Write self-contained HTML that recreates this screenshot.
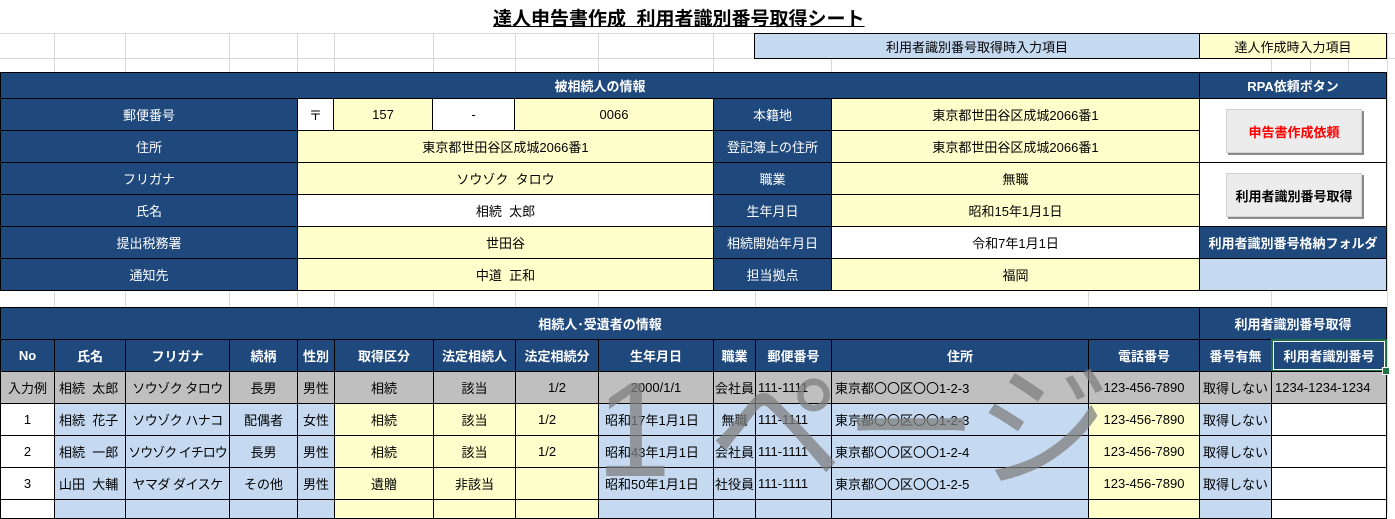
<!DOCTYPE html>
<html><head><meta charset="utf-8"><style>
body{margin:0;width:1395px;height:509px;overflow:hidden;background:#fff;font-family:"Liberation Sans","Noto Sans CJK JP",sans-serif;position:relative}
.c{position:absolute;box-sizing:border-box;border:1px solid #000;display:flex;align-items:center;justify-content:center;font-size:13px;white-space:nowrap;overflow:hidden;color:#000}
.d{background:#1f497d;color:#fff}
.h{font-weight:bold}
.y{background:#ffffcc}.b{background:#c5d9f1}.g{background:#bfbfbf}.w{background:#fff}
.l{justify-content:flex-start;padding-left:4px}
.k{letter-spacing:-0.5px}
.vl{position:absolute;width:1px;background:#d9d9d9}
.hl{position:absolute;height:1px;background:#d9d9d9}
.btn{position:absolute;background:#ececec;border:1px solid #d0d0d0;box-shadow:2px 2px 0 #8a8a8a;display:flex;align-items:center;justify-content:center;font-size:13px;font-weight:bold}
</style></head><body>
<div class="hl" style="left:0;top:33px;width:1395px"></div>
<div class="hl" style="left:0;top:58px;width:1395px"></div>
<div class="vl" style="left:54px;top:33px;height:39px"></div>
<div class="vl" style="left:125px;top:33px;height:39px"></div>
<div class="vl" style="left:229px;top:33px;height:39px"></div>
<div class="vl" style="left:297px;top:33px;height:39px"></div>
<div class="vl" style="left:334px;top:33px;height:39px"></div>
<div class="vl" style="left:433px;top:33px;height:39px"></div>
<div class="vl" style="left:515px;top:33px;height:39px"></div>
<div class="vl" style="left:598px;top:33px;height:39px"></div>
<div class="vl" style="left:713px;top:33px;height:39px"></div>
<div class="vl" style="left:831px;top:58px;height:14px"></div>
<div class="vl" style="left:1271px;top:58px;height:14px"></div>
<div class="vl" style="left:1310px;top:58px;height:14px"></div>
<div class="vl" style="left:1348px;top:58px;height:14px"></div>
<div class="vl" style="left:1387px;top:33px;height:480px"></div>
<div class="vl" style="left:54px;top:290px;height:17px"></div>
<div class="vl" style="left:125px;top:290px;height:17px"></div>
<div class="vl" style="left:229px;top:290px;height:17px"></div>
<div class="vl" style="left:297px;top:290px;height:17px"></div>
<div class="vl" style="left:334px;top:290px;height:17px"></div>
<div class="vl" style="left:433px;top:290px;height:17px"></div>
<div class="vl" style="left:515px;top:290px;height:17px"></div>
<div class="vl" style="left:598px;top:290px;height:17px"></div>
<div class="vl" style="left:755px;top:290px;height:17px"></div>
<div class="vl" style="left:1088px;top:290px;height:17px"></div>
<div class="vl" style="left:1271px;top:290px;height:17px"></div>

<div style="position:absolute;left:493px;top:4px;font-size:19px;font-weight:bold;text-decoration:underline;white-space:nowrap">達人申告書作成&nbsp;&nbsp;利用者識別番号取得シート</div>

<div class="c b" style="left:754px;top:33px;width:446px;height:26px">利用者識別番号取得時入力項目</div>
<div class="c y" style="left:1199px;top:33px;width:188px;height:26px">達人作成時入力項目</div>

<div class="c d h" style="left:0;top:72px;width:1200px;height:27px">被相続人の情報</div>
<div class="c d h" style="left:1199px;top:72px;width:188px;height:27px">RPA依頼ボタン</div>

<div class="c d" style="left:0;top:98px;width:298px;height:33px">郵便番号</div>
<div class="c w" style="left:297px;top:98px;width:37px;height:33px">〒</div>
<div class="c y" style="left:333px;top:98px;width:100px;height:33px">157</div>
<div class="c w" style="left:432px;top:98px;width:83px;height:33px">-</div>
<div class="c y" style="left:514px;top:98px;width:200px;height:33px">0066</div>
<div class="c d" style="left:713px;top:98px;width:119px;height:33px">本籍地</div>
<div class="c y" style="left:831px;top:98px;width:369px;height:33px">東京都世田谷区成城2066番1</div>

<div class="c d" style="left:0;top:130px;width:298px;height:33px">住所</div>
<div class="c y" style="left:297px;top:130px;width:417px;height:33px">東京都世田谷区成城2066番1</div>
<div class="c d" style="left:713px;top:130px;width:119px;height:33px">登記簿上の住所</div>
<div class="c y" style="left:831px;top:130px;width:369px;height:33px">東京都世田谷区成城2066番1</div>

<div class="c d" style="left:0;top:162px;width:298px;height:33px">フリガナ</div>
<div class="c y" style="left:297px;top:162px;width:417px;height:33px">ソウゾク&nbsp;&nbsp;タロウ</div>
<div class="c d" style="left:713px;top:162px;width:119px;height:33px">職業</div>
<div class="c y" style="left:831px;top:162px;width:369px;height:33px">無職</div>

<div class="c d" style="left:0;top:194px;width:298px;height:33px">氏名</div>
<div class="c w" style="left:297px;top:194px;width:417px;height:33px">相続&nbsp;&nbsp;太郎</div>
<div class="c d" style="left:713px;top:194px;width:119px;height:33px">生年月日</div>
<div class="c y" style="left:831px;top:194px;width:369px;height:33px">昭和15年1月1日</div>

<div class="c d" style="left:0;top:226px;width:298px;height:33px">提出税務署</div>
<div class="c y" style="left:297px;top:226px;width:417px;height:33px">世田谷</div>
<div class="c d" style="left:713px;top:226px;width:119px;height:33px">相続開始年月日</div>
<div class="c w" style="left:831px;top:226px;width:369px;height:33px">令和7年1月1日</div>

<div class="c d" style="left:0;top:258px;width:298px;height:33px">通知先</div>
<div class="c y" style="left:297px;top:258px;width:417px;height:33px">中道&nbsp;&nbsp;正和</div>
<div class="c d" style="left:713px;top:258px;width:119px;height:33px">担当拠点</div>
<div class="c y" style="left:831px;top:258px;width:369px;height:33px">福岡</div>

<div class="c w" style="left:1199px;top:98px;width:188px;height:65px"></div>
<div class="c w" style="left:1199px;top:162px;width:188px;height:65px"></div>
<div class="c d h" style="left:1199px;top:226px;width:188px;height:33px">利用者識別番号格納フォルダ</div>
<div class="c b" style="left:1199px;top:258px;width:188px;height:33px"></div>
<div class="btn" style="left:1226px;top:109px;width:134px;height:42px;color:#f00">申告書作成依頼</div>
<div class="btn" style="left:1226px;top:173px;width:134px;height:42px;color:#000">利用者識別番号取得</div>

<div class="c d h" style="left:0;top:307px;width:1200px;height:33px">相続人･受遺者の情報</div>
<div class="c d h" style="left:1199px;top:307px;width:188px;height:33px">利用者識別番号取得</div>

<div class="c d h" style="left:0;top:339px;width:55px;height:33px">No</div>
<div class="c d h" style="left:54px;top:339px;width:72px;height:33px">氏名</div>
<div class="c d h" style="left:125px;top:339px;width:105px;height:33px">フリガナ</div>
<div class="c d h" style="left:229px;top:339px;width:69px;height:33px">続柄</div>
<div class="c d h" style="left:297px;top:339px;width:38px;height:33px">性別</div>
<div class="c d h" style="left:334px;top:339px;width:100px;height:33px">取得区分</div>
<div class="c d h" style="left:433px;top:339px;width:83px;height:33px">法定相続人</div>
<div class="c d h" style="left:515px;top:339px;width:84px;height:33px">法定相続分</div>
<div class="c d h" style="left:598px;top:339px;width:116px;height:33px">生年月日</div>
<div class="c d h" style="left:713px;top:339px;width:43px;height:33px">職業</div>
<div class="c d h" style="left:755px;top:339px;width:77px;height:33px">郵便番号</div>
<div class="c d h" style="left:831px;top:339px;width:258px;height:33px">住所</div>
<div class="c d h" style="left:1088px;top:339px;width:112px;height:33px">電話番号</div>
<div class="c d h" style="left:1199px;top:339px;width:73px;height:33px">番号有無</div>
<div class="c d h" style="left:1271px;top:339px;width:116px;height:33px;border:2px solid #217346;outline:1px solid #fff;outline-offset:-3px">利用者識別番号</div>

<div class="c g" style="left:0;top:371px;width:55px;height:33px">入力例</div>
<div class="c g l" style="left:54px;top:371px;width:72px;height:33px">相続&nbsp;&nbsp;太郎</div>
<div class="c g k" style="left:125px;top:371px;width:105px;height:33px">ソウゾク&nbsp;タロウ</div>
<div class="c g" style="left:229px;top:371px;width:69px;height:33px">長男</div>
<div class="c g" style="left:297px;top:371px;width:38px;height:33px">男性</div>
<div class="c g" style="left:334px;top:371px;width:100px;height:33px">相続</div>
<div class="c g" style="left:433px;top:371px;width:83px;height:33px">該当</div>
<div class="c g" style="left:515px;top:371px;width:84px;height:33px">1/2</div>
<div class="c g" style="left:598px;top:371px;width:116px;height:33px">2000/1/1</div>
<div class="c g" style="left:713px;top:371px;width:43px;height:33px">会社員</div>
<div class="c g l" style="left:755px;top:371px;width:77px;height:33px;padding-left:2px">111-1111</div>
<div class="c g l" style="left:831px;top:371px;width:258px;height:33px;padding-left:3px">東京都〇〇区〇〇1-2-3</div>
<div class="c g" style="left:1088px;top:371px;width:112px;height:33px">123-456-7890</div>
<div class="c g" style="left:1199px;top:371px;width:73px;height:33px">取得しない</div>
<div class="c g l" style="left:1271px;top:371px;width:116px;height:33px;padding-left:3px">1234-1234-1234</div>

<div class="c w" style="left:0;top:403px;width:55px;height:33px">1</div>
<div class="c b l" style="left:54px;top:403px;width:72px;height:33px">相続&nbsp;&nbsp;花子</div>
<div class="c b k" style="left:125px;top:403px;width:105px;height:33px">ソウゾク&nbsp;ハナコ</div>
<div class="c b" style="left:229px;top:403px;width:69px;height:33px">配偶者</div>
<div class="c b" style="left:297px;top:403px;width:38px;height:33px">女性</div>
<div class="c y" style="left:334px;top:403px;width:100px;height:33px">相続</div>
<div class="c y" style="left:433px;top:403px;width:83px;height:33px">該当</div>
<div class="c y l" style="left:515px;top:403px;width:84px;height:33px;padding-left:22px">1/2</div>
<div class="c b l" style="left:598px;top:403px;width:116px;height:33px;padding-left:6px">昭和17年1月1日</div>
<div class="c b" style="left:713px;top:403px;width:43px;height:33px">無職</div>
<div class="c b l" style="left:755px;top:403px;width:77px;height:33px;padding-left:2px">111-1111</div>
<div class="c b l" style="left:831px;top:403px;width:258px;height:33px;padding-left:3px">東京都〇〇区〇〇1-2-3</div>
<div class="c y" style="left:1088px;top:403px;width:112px;height:33px">123-456-7890</div>
<div class="c b" style="left:1199px;top:403px;width:73px;height:33px">取得しない</div>
<div class="c w" style="left:1271px;top:403px;width:116px;height:33px"></div>

<div class="c w" style="left:0;top:435px;width:55px;height:33px">2</div>
<div class="c b l" style="left:54px;top:435px;width:72px;height:33px">相続&nbsp;&nbsp;一郎</div>
<div class="c b k" style="left:125px;top:435px;width:105px;height:33px;letter-spacing:-1px">ソウゾク&nbsp;イチロウ</div>
<div class="c b" style="left:229px;top:435px;width:69px;height:33px">長男</div>
<div class="c b" style="left:297px;top:435px;width:38px;height:33px">男性</div>
<div class="c y" style="left:334px;top:435px;width:100px;height:33px">相続</div>
<div class="c y" style="left:433px;top:435px;width:83px;height:33px">該当</div>
<div class="c y l" style="left:515px;top:435px;width:84px;height:33px;padding-left:22px">1/2</div>
<div class="c b l" style="left:598px;top:435px;width:116px;height:33px;padding-left:6px">昭和43年1月1日</div>
<div class="c b" style="left:713px;top:435px;width:43px;height:33px">会社員</div>
<div class="c b l" style="left:755px;top:435px;width:77px;height:33px;padding-left:2px">111-1111</div>
<div class="c b l" style="left:831px;top:435px;width:258px;height:33px;padding-left:3px">東京都〇〇区〇〇1-2-4</div>
<div class="c y" style="left:1088px;top:435px;width:112px;height:33px">123-456-7890</div>
<div class="c b" style="left:1199px;top:435px;width:73px;height:33px">取得しない</div>
<div class="c w" style="left:1271px;top:435px;width:116px;height:33px"></div>

<div class="c w" style="left:0;top:467px;width:55px;height:33px">3</div>
<div class="c b l" style="left:54px;top:467px;width:72px;height:33px">山田&nbsp;&nbsp;大輔</div>
<div class="c b k" style="left:125px;top:467px;width:105px;height:33px">ヤマダ&nbsp;ダイスケ</div>
<div class="c b" style="left:229px;top:467px;width:69px;height:33px">その他</div>
<div class="c b" style="left:297px;top:467px;width:38px;height:33px">男性</div>
<div class="c y" style="left:334px;top:467px;width:100px;height:33px">遺贈</div>
<div class="c y" style="left:433px;top:467px;width:83px;height:33px">非該当</div>
<div class="c y" style="left:515px;top:467px;width:84px;height:33px"></div>
<div class="c b l" style="left:598px;top:467px;width:116px;height:33px;padding-left:6px">昭和50年1月1日</div>
<div class="c b" style="left:713px;top:467px;width:43px;height:33px;justify-content:flex-end;padding-right:1px">会社役員</div>
<div class="c b l" style="left:755px;top:467px;width:77px;height:33px;padding-left:2px">111-1111</div>
<div class="c b l" style="left:831px;top:467px;width:258px;height:33px;padding-left:3px">東京都〇〇区〇〇1-2-5</div>
<div class="c y" style="left:1088px;top:467px;width:112px;height:33px">123-456-7890</div>
<div class="c b" style="left:1199px;top:467px;width:73px;height:33px">取得しない</div>
<div class="c w" style="left:1271px;top:467px;width:116px;height:33px"></div>

<div class="c w" style="left:0;top:499px;width:55px;height:20px"></div>
<div class="c b" style="left:54px;top:499px;width:72px;height:20px"></div>
<div class="c b" style="left:125px;top:499px;width:105px;height:20px"></div>
<div class="c b" style="left:229px;top:499px;width:69px;height:20px"></div>
<div class="c b" style="left:297px;top:499px;width:38px;height:20px"></div>
<div class="c y" style="left:334px;top:499px;width:100px;height:20px"></div>
<div class="c y" style="left:433px;top:499px;width:83px;height:20px"></div>
<div class="c y" style="left:515px;top:499px;width:84px;height:20px"></div>
<div class="c b" style="left:598px;top:499px;width:116px;height:20px"></div>
<div class="c b" style="left:713px;top:499px;width:43px;height:20px"></div>
<div class="c b" style="left:755px;top:499px;width:77px;height:20px"></div>
<div class="c b" style="left:831px;top:499px;width:258px;height:20px"></div>
<div class="c y" style="left:1088px;top:499px;width:112px;height:20px"></div>
<div class="c b" style="left:1199px;top:499px;width:73px;height:20px"></div>
<div class="c w" style="left:1271px;top:499px;width:116px;height:20px"></div>
<div style="position:absolute;left:1382px;top:367px;width:6px;height:6px;background:#217346;border:1px solid #fff"></div>

<svg style="position:absolute;left:0;top:0" width="1395" height="509">
<text x="596" y="476" font-size="135" fill="#7f7f7f" fill-opacity="0.75" font-family="Liberation Sans, Noto Sans CJK JP, sans-serif">1 ページ</text>
</svg>
</body></html>
